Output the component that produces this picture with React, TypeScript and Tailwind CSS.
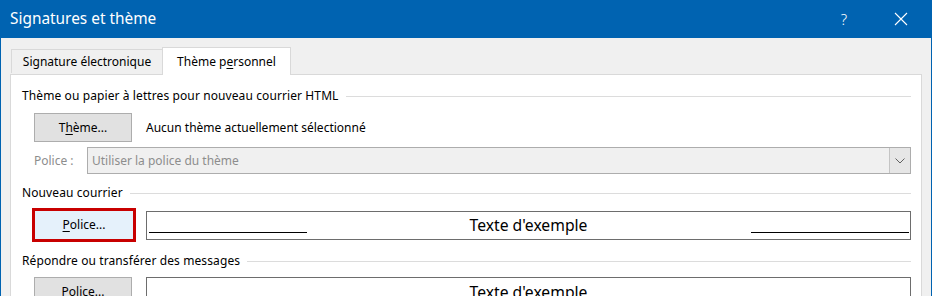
import React from "react";

const font = { fontFamily: '"Noto Sans", "Segoe UI", sans-serif' };

function Heading({ children }: { children: React.ReactNode }) {
  return (
    <div className="flex items-center h-[16px] ml-[10px]">
      <span className="text-[12px] leading-[16px] text-black whitespace-nowrap tracking-[0.1px]">{children}</span>
      <div className="flex-1 h-px bg-[#dcdcdc] ml-[7px]" />
    </div>
  );
}

function Sample({ lines }: { lines?: boolean }) {
  return (
    <div className="relative flex-1 h-[29px] border border-[#6d6d6d] bg-white flex items-center justify-center">
      <span className="text-[15.7px] leading-[20px] text-black">Texte d'exemple</span>
      {lines && (
        <>
          <div className="absolute left-[2px] top-[20px] w-[158px] h-px bg-black" />
          <div className="absolute right-[1px] top-[20px] w-[158px] h-px bg-black" />
        </>
      )}
    </div>
  );
}

export default function App() {
  return (
    <div
      className="w-[932px] h-[296px] overflow-hidden bg-[#f0f0f0] border-x border-[#0063b1] flex flex-col"
      style={font}
    >
      {/* Title bar */}
      <div className="h-[38px] shrink-0 bg-[#0063b1] flex items-center text-white">
        <span className="ml-[9px] text-[15.4px] leading-[20px]">Signatures et thème</span>
        <div className="flex-1" />
        <span className="text-[15px] leading-[20px] mr-[47px] font-light">?</span>
        <svg width="14" height="14" viewBox="0 0 14 14" className="mr-[23px]">
          <path d="M1 1 L13 13 M13 1 L1 13" stroke="white" strokeWidth="1.1" fill="none" />
        </svg>
      </div>

      {/* Body */}
      <div className="flex-1 flex flex-col pl-[9px] pr-[9px] pt-[9px]">
        {/* Tabs */}
        <div className="flex items-end h-[27px] relative z-10 pl-[1px]">
          <div className="h-[24px] w-[151px] border-t border-l border-[#d9d9d9] bg-[#f0f0f0] flex items-center justify-center text-[12px] text-black mb-[1px]">
            <span>
              Si<span className="underline underline-offset-2">g</span>nature électronique
            </span>
          </div>
          <div className="h-[28px] w-[129px] border-t border-l border-r border-[#d9d9d9] bg-white flex items-center justify-center text-[12px] text-black -mb-px">
            <span>
              Thème p<span className="underline underline-offset-2">e</span>rsonnel
            </span>
          </div>
        </div>

        {/* Panel */}
        <div className="flex-1 bg-white border border-[#d9d9d9] pl-[1px] pr-[10px] pt-[13px]">
          <Heading>Thème ou papier à lettres pour nouveau courrier HTML</Heading>

          <div className="flex items-center mt-[9px] ml-[22px]">
            <div className="w-[98px] h-[29px] bg-[#e1e1e1] border border-[#adadad] flex items-center justify-center text-[12px] text-black">
              <span>
                T<span className="underline underline-offset-2">h</span>ème...
              </span>
            </div>
            <span className="ml-[14px] text-[12px] text-black">Aucun thème actuellement sélectionné</span>
          </div>

          <div className="flex items-center mt-[5px] ml-[22px]">
            <span className="w-[53px] text-[12px] text-[#8d8d8d]">Police :</span>
            <div className="flex-1 h-[27px] bg-[#f0f0f0] border border-[#adadad] flex items-center">
              <span className="ml-[4px] text-[12px] text-[#8d8d8d] flex-1">Utiliser la police du thème</span>
              <div className="w-[21px] h-full border-l border-[#c4c4c4] bg-[#e6e6e6] flex items-center justify-center">
                <svg width="10" height="6" viewBox="0 0 10 6">
                  <path d="M0.5 0.5 L5 5 L9.5 0.5" stroke="#606060" strokeWidth="1" fill="none" />
                </svg>
              </div>
            </div>
          </div>

          <div className="mt-[11px]">
            <Heading>Nouveau courrier</Heading>
          </div>

          <div className="flex items-center mt-[7px] ml-[20px]">
            <div className="w-[104px] h-[34px] border-[3px] border-[#c80000] bg-[#e5f1fb] flex items-center justify-center text-[12px] text-black">
              <span>
                <span className="underline underline-offset-2">P</span>olice...
              </span>
            </div>
            <div className="w-[10px]" />
            <Sample lines />
          </div>

          <div className="mt-[11px]">
            <Heading>Répondre ou transférer des messages</Heading>
          </div>

          <div className="flex items-start mt-[8px] ml-[22px]">
            <div className="w-[98px] h-[29px] bg-[#e1e1e1] border border-[#adadad] flex items-center justify-center text-[12px] text-black">
              <span>
                <span className="underline underline-offset-2">P</span>olice...
              </span>
            </div>
            <div className="w-[14px]" />
            <Sample />
          </div>
        </div>
      </div>
    </div>
  );
}
